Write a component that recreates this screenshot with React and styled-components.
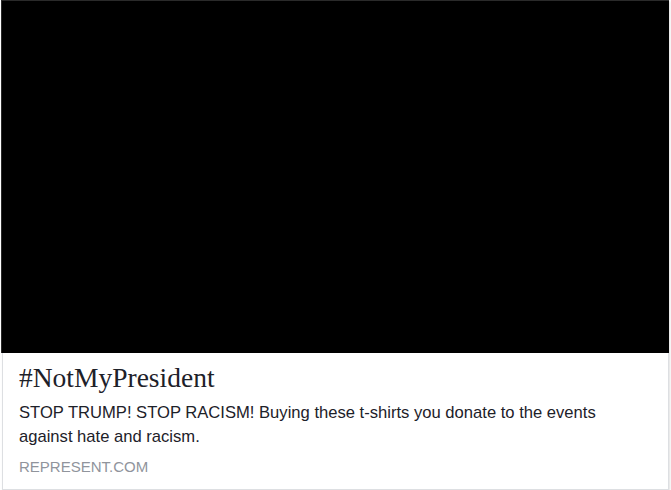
import React from "react";
import styled, { createGlobalStyle } from "styled-components";

const GlobalStyle = createGlobalStyle`
  html, body {
    margin: 0;
    padding: 0;
    background: #fff;
  }
`;

const Card = styled.div`
  width: 665px;
  margin-left: 2px;
  background: #fff;
  border: 1px solid #dddfe2;
  border-top: none;
  box-shadow: 1px 1px 2px rgba(0, 0, 0, 0.12);
`;

const Image = styled.div`
  height: 353px;
  width: 668px;
  margin-left: -2px;
  background: #000;
  border-top: 1px solid #2a2a2a;
  border-left: 1px solid #2a2a2a;
  box-sizing: border-box;
`;

const Body = styled.div`
  padding: 10px 16px 13px 16px;
`;

const Title = styled.div`
  font-family: "Liberation Serif", Georgia, "DejaVu Serif", serif;
  font-size: 27.5px;
  line-height: 30px;
  color: #1d2129;
  margin-bottom: 8px;
`;

const Description = styled.div`
  font-family: "Liberation Sans", Arial, sans-serif;
  font-size: 16.6px;
  line-height: 24px;
  color: #1d2129;
  width: 610px;
`;

const Domain = styled.div`
  font-family: "Liberation Sans", Arial, sans-serif;
  font-size: 15px;
  line-height: 18px;
  color: #90949c;
  text-transform: uppercase;
  margin-top: 9px;
`;

export default function App() {
  return (
    <>
      <GlobalStyle />
      <Card>
        <Image />
        <Body>
          <Title>#NotMyPresident</Title>
          <Description>
            STOP TRUMP! STOP RACISM! Buying these t-shirts you donate to the events against hate and racism.
          </Description>
          <Domain>represent.com</Domain>
        </Body>
      </Card>
    </>
  );
}
